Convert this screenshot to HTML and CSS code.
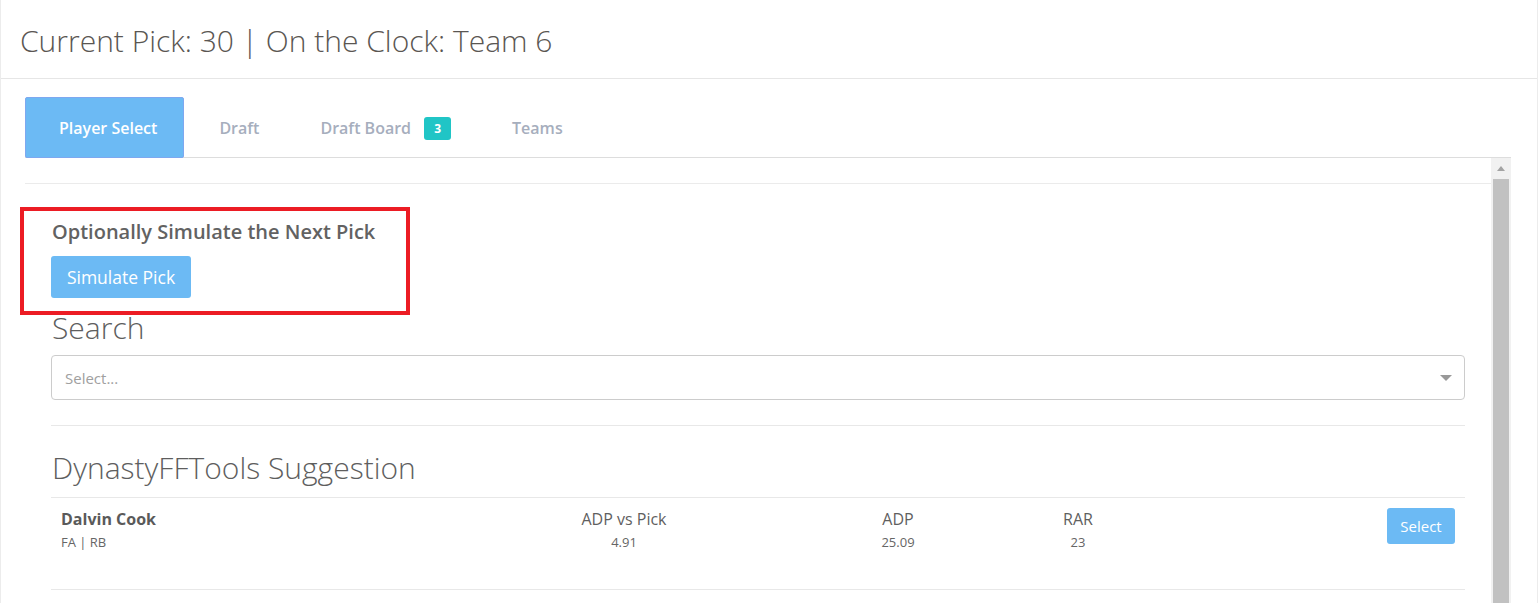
FILE: index.html
```html
<!DOCTYPE html>
<html>
<head>
<meta charset="utf-8">
<link rel="stylesheet" href="styles.css">
</head>
<body>
<div class="card">
  <div class="card-header">
    <h1 class="title">Current Pick: 30 | On the Clock: Team 6</h1>
  </div>
  <div class="card-body">
    <div class="tabs">
      <div class="tab active">Player Select</div>
      <div class="tab">Draft</div>
      <div class="tab">Draft Board <span class="badge">3</span></div>
      <div class="tab">Teams</div>
    </div>
    <div class="pane">
      <div class="pane-content">
        <div class="topline"></div>
        <div class="inner">
          <div class="simulate">
            <h4 class="sim-title">Optionally Simulate the Next Pick</h4>
            <button class="btn btn-sim">Simulate Pick</button>
            <div class="highlight"></div>
          </div>
          <h2 class="section-title search-title">Search</h2>
          <div class="select">
            <span class="placeholder">Select...</span>
            <span class="caret"></span>
          </div>
          <hr class="divider first">
          <h2 class="section-title sugg-title">DynastyFFTools Suggestion</h2>
          <hr class="divider second">
          <div class="player-row">
            <div class="cell name-cell">
              <div class="pname">Dalvin Cook</div>
              <div class="psub">FA | RB</div>
            </div>
            <div class="cell stat">
              <div class="slabel">ADP vs Pick</div>
              <div class="sval">4.91</div>
            </div>
            <div class="cell stat">
              <div class="slabel">ADP</div>
              <div class="sval">25.09</div>
            </div>
            <div class="cell stat">
              <div class="slabel">RAR</div>
              <div class="sval">23</div>
            </div>
            <div class="cell action">
              <button class="btn btn-select">Select</button>
            </div>
          </div>
          <hr class="divider third">
        </div>
      </div>
      <div class="scrollbar">
        <div class="sb-arrow"></div>
        <div class="sb-thumb"></div>
      </div>
    </div>
  </div>
</div>
</body>
</html>
```
FILE: styles.css
```css
* { box-sizing: border-box; }
html, body { margin: 0; padding: 0; height: 603px; overflow: hidden; background: #fff; }
body { font-family: "Open Sans", "Noto Sans", sans-serif; color: #666; }

.card {
  width: 1538px;
  height: 603px;
  border-left: 1px solid #ececec;
  border-right: 1px solid #ececec;
  overflow: hidden;
}
.card-header {
  height: 79px;
  border-bottom: 1px solid #e6e6e6;
  display: flex;
  align-items: center;
  padding-left: 19px;
}
.title {
  margin: 0;
  font-size: 30px;
  font-weight: 300;
  color: #5a5652;
  line-height: 40px;
  padding-top: 4px;
}

.card-body { padding: 18px 26px 0 24px; }

.tabs {
  display: flex;
  align-items: stretch;
  height: 61px;
  border-bottom: 1px solid #dddddd;
}
.tab {
  display: flex;
  align-items: center;
  padding: 2px 26px 0 35px;
  font-size: 16px;
  font-weight: 600;
  color: #a6aebd;
}
.tab.active {
  background: #6cbaf4;
  border: 1px solid #7ea8f0;
  border-radius: 2px;
  color: #fff;
  padding: 0 26px 0 33px;
  height: 61px;
}
.badge {
  display: inline-flex;
  align-items: center;
  justify-content: center;
  width: 27px;
  height: 23px;
  margin-left: 13px;
  margin-top: 1px;
  background: #20c5c6;
  color: #fff;
  font-size: 12px;
  font-weight: 700;
  border-radius: 3px;
}

.pane {
  display: flex;
  height: 460px;
}
.pane-content {
  flex: 1;
  position: relative;
}
.topline {
  height: 26px;
  border-bottom: 1px solid #ebebeb;
}
.inner {
  padding: 0 26px 0 26px;
}

.simulate {
  position: relative;
  padding-top: 36px;
}
.sim-title {
  margin: 0 0 12px 1px;
  font-size: 20px;
  font-weight: 600;
  line-height: 24px;
  color: #626262;
}
.btn {
  display: block;
  border: none;
  background: #6cbaf4;
  color: #fff;
  font-family: "Open Sans", "Noto Sans", sans-serif;
  border-radius: 3px;
  cursor: pointer;
}
.btn-sim {
  width: 140px;
  height: 42px;
  font-size: 17.5px;
  font-weight: 400;
  padding: 0;
}
.highlight {
  position: absolute;
  left: -31px;
  top: 23px;
  width: 390px;
  height: 108px;
  border: 4px solid #ec1c24;
}

.section-title {
  margin: 0;
  font-size: 30px;
  font-weight: 300;
  line-height: 36px;
  color: #5e5e5e;
  padding-left: 1px;
}
.search-title { margin-top: 12px; }

.select {
  margin-top: 9px;
  height: 45px;
  border: 1px solid #cccccc;
  border-radius: 4px;
  display: flex;
  align-items: center;
  justify-content: space-between;
  padding: 0 12px 0 13px;
}
.placeholder {
  font-size: 15px;
  color: #a0a0a0;
}
.caret {
  width: 0;
  height: 0;
  border-left: 6px solid transparent;
  border-right: 6px solid transparent;
  border-top: 6px solid #999;
}

.divider {
  border: none;
  border-top: 1px solid #e8e8e8;
  margin: 0;
}
.divider.first { margin-top: 25px; }
.sugg-title { margin-top: 24px; }
.divider.second { margin-top: 11px; }

.player-row {
  display: grid;
  grid-template-columns: 391px 344px 204px 156px 1fr;
  padding: 10px 10px 0 10px;
  height: 91px;
}
.cell { min-width: 0; }
.pname {
  font-size: 16px;
  font-weight: 700;
  line-height: 22px;
  color: #5a5a5a;
}
.psub {
  margin-top: 3px;
  font-size: 13px;
  line-height: 18px;
  color: #666;
}
.stat { text-align: center; }
.slabel {
  font-size: 16px;
  line-height: 22px;
  color: #5f5f5f;
}
.sval {
  margin-top: 3px;
  font-size: 13px;
  line-height: 18px;
  color: #666;
}
.action {
  display: flex;
  justify-content: flex-end;
  align-items: flex-start;
}
.btn-select {
  width: 68px;
  height: 36px;
  font-size: 15px;
  padding: 0;
}

.scrollbar {
  width: 20px;
  background: #f1f1f1;
  display: flex;
  flex-direction: column;
  align-items: center;
}
.sb-arrow {
  height: 21px;
  width: 100%;
  display: flex;
  justify-content: center;
  align-items: center;
}
.sb-arrow::before {
  content: "";
  width: 0;
  height: 0;
  border-left: 4px solid transparent;
  border-right: 4px solid transparent;
  border-bottom: 5px solid #a3a3a3;
}
.sb-thumb {
  flex: 1;
  width: 16px;
  background: #c1c1c1;
}
```
